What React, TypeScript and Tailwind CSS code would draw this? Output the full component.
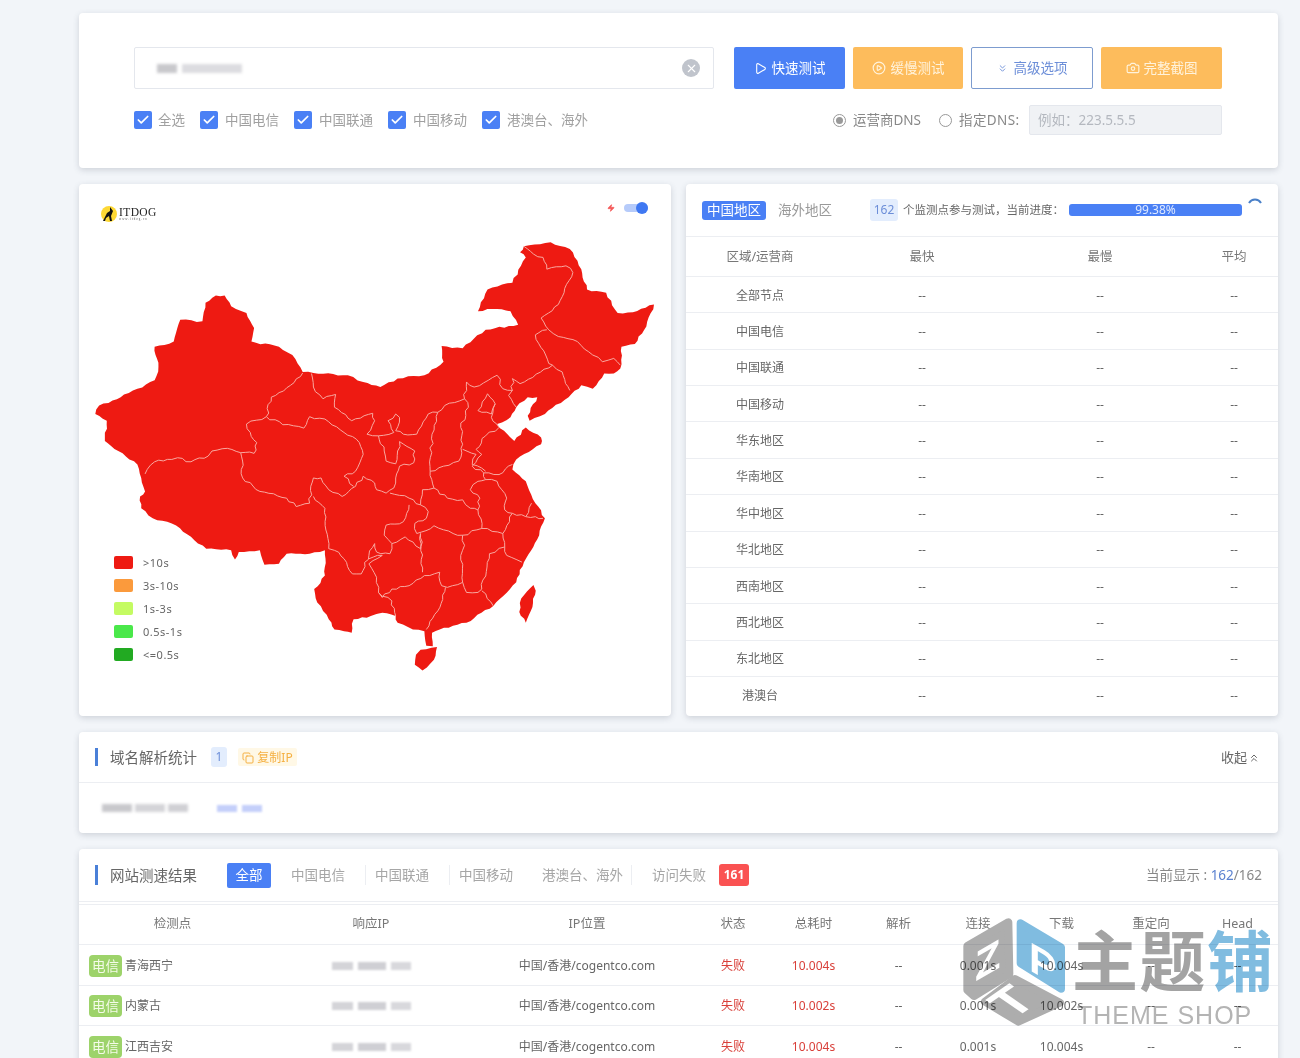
import {
  Camera,
  Check,
  ChevronsDown,
  ChevronsUp,
  CirclePlay,
  Copy,
  Play,
  X,
  Zap,
} from "lucide-react";

const outline =
  "40 680 50 655 85 640 115 622 150 605 195 580 205 540 195 480 245 465 262 400 320 405 328 350 355 328 378 328 395 360 435 380 455 425 448 465 520 480 555 505 582 555 610 558 700 565 740 585 785 600 830 575 900 565 950 525 945 478 1000 485 1060 430 1145 415 1125 375 1090 368 1040 375 1065 310 1130 290 1165 215 1150 200 1160 182 1230 170 1280 190 1310 250 1325 310 1375 320 1405 380 1445 378 1500 355 1480 420 1450 472 1415 480 1412 545 1395 560 1370 560 1340 605 1310 595 1285 620 1215 680 1175 700 1170 685 1195 630 1170 630 1140 660 1125 690 1090 710 1125 750 1135 760 1165 720 1205 750 1205 770 1140 815 1130 845 1165 880 1190 945 1215 990 1200 1040 1160 1120 1140 1180 1080 1250 1010 1300 940 1320 920 1330 922 1370 905 1368 900 1325 870 1320 830 1300 825 1280 790 1270 760 1280 715 1290 710 1330 690 1325 665 1320 650 1290 620 1240 612 1200 640 1160 640 1085 600 1095 540 1095 520 1125 482 1128 470 1085 415 1090 405 1112 395 1085 330 1080 290 1045 240 1005 190 990 160 960 157 925 170 910 160 870 150 830 100 790 65 760 70 700 40 680";

const islands = [
  "1185 1188 1191 1205 1178 1265 1165 1300 1148 1268 1153 1228 1185 1188",
  "890 1380 933 1372 925 1410 895 1442 875 1425 878 1395 890 1380",
];

const borders = [
  "170 858 195 822 240 815 255 810 290 822 335 805 345 790 385 782 420 795 455 797 462 765 445 735 435 710 487 688 500 630 550 595 582 558",
  "420 795 425 870 470 910 540 930 565 955 600 945 610 870 630 870 650 905 685 925 720 895 740 865",
  "487 688 530 712 585 722 600 688 640 695 690 735 730 765 740 800 720 850 690 865 715 895",
  "605 560 610 600 635 635 668 622 665 660 710 700 765 678 770 700 750 740 780 745 820 735 805 700 825 680 835 690 825 730 845 740 880 740 910 680 935 675 965 648 1005 635 1010 585 1030 600 1090 565 1105 605 1130 610 1130 575 1150 590 1235 535 1260 555 1280 610",
  "780 745 795 790 800 820 825 828 830 790 835 762 875 790 872 825 835 835 825 870 820 900 800 915 775 905 770 885 740 865",
  "935 675 920 740 915 850 925 900 895 905 890 950 860 930 810 915",
  "1005 635 1015 660 995 720 1000 770 990 820 950 835 915 850",
  "1000 785 1035 800 1025 830 1060 850",
  "1040 670 1065 620 1085 650 1075 680 1050 675 1040 670",
  "1085 650 1075 690 1095 720",
  "1130 610 1120 625 1140 660",
  "1095 720 1060 745 1035 785 1050 800 1025 835 1055 855 1095 860 1130 830",
  "925 900 960 930 1000 935 1020 960 1040 965 1045 930 1020 905 1040 880 1060 875 1055 855",
  "1060 875 1090 880 1115 930 1110 965 1130 975 1165 985 1180 945",
  "1130 975 1105 1035 1050 1020 1040 965",
  "1165 985 1190 985 1210 990",
  "1105 1035 1110 1075 1115 1100 1155 1120",
  "890 950 910 970 905 990 875 1005 880 1035 925 1012 975 1035 1000 1040 1050 1020",
  "860 950 845 1000 800 1010 795 1040 815 1065 850 1045 870 1060 890 1080 890 1035",
  "610 925 640 960 648 1050 650 1080 665 1085 690 1110 712 1155 735 1155 755 1100 770 1065 775 1090 810 1095 815 1065",
  "755 1110 790 1100 755 1125 775 1165 780 1210 790 1225 815 1200 860 1190 900 1160 940 1150 945 1190",
  "890 1035 895 1150",
  "1000 1040 1005 1070 995 1100 1000 1180 960 1195 945 1190",
  "1110 1075 1070 1095 1050 1200 1040 1210 1010 1210 1000 1180",
  "1050 1205 1080 1250",
  "955 1195 935 1265 905 1320",
  "780 1210 815 1235 825 1280",
  "1160 182 1185 205 1210 215 1220 250 1270 240 1288 260 1265 320 1250 355 1205 395 1225 430 1250 450 1300 465 1340 505 1365 525 1395 515 1412 535",
  "1220 430 1190 445 1225 530 1235 535",
];

// break long straight map segments into small uneven steps so borders look natural
function rough(points: string, amp: number) {
  const n = points.split(" ").map(Number);
  const out: string[] = [`${n[0]},${n[1]}`];
  for (let i = 2; i < n.length; i += 2) {
    const [x0, y0, x1, y1] = [n[i - 2], n[i - 1], n[i], n[i + 1]];
    const len = Math.hypot(x1 - x0, y1 - y0);
    const steps = Math.max(1, Math.round(len / 13));
    for (let s = 1; s < steps; s++) {
      const t = s / steps;
      const seed = Math.sin(x0 * 12.9898 + y0 * 78.233 + s * 37.719) * 43758.5453;
      const off = (seed - Math.floor(seed) - 0.5) * 2 * amp;
      out.push(
        `${(x0 + (x1 - x0) * t - ((y1 - y0) / len) * off).toFixed(1)},${(y0 + (y1 - y0) * t + ((x1 - x0) / len) * off).toFixed(1)}`,
      );
    }
    out.push(`${x1},${y1}`);
  }
  return out.join(" ");
}

const regions = [
  "全部节点",
  "中国电信",
  "中国联通",
  "中国移动",
  "华东地区",
  "华南地区",
  "华中地区",
  "华北地区",
  "西南地区",
  "西北地区",
  "东北地区",
  "港澳台",
];

const results = [
  { name: "青海西宁", total: "10.004s" },
  { name: "内蒙古", total: "10.002s" },
  { name: "江西吉安", total: "10.004s" },
];

const cardClass = "bg-white rounded shadow-[0_2px_6px_rgba(60,70,90,0.2)]";
const speedCols =
  "grid grid-cols-[187px_210px_222px_70px_91px_79px_80px_87px_92px_81px]";

function Checkbox({ label, first }: { label: string; first?: boolean }) {
  return (
    <label className={first ? "flex items-center gap-[6px]" : "flex items-center gap-[7px]"}>
      <span className="flex h-[18px] w-[18px] items-center justify-center rounded-[2px] bg-[#4a80f5]">
        <Check className="h-[14px] w-[14px] text-white" strokeWidth={3} />
      </span>
      <span className="text-[13.5px] text-[#a0a0a0]">{label}</span>
    </label>
  );
}

function BlurIp() {
  return (
    <div className="flex items-center justify-center gap-[5px] blur-[1px]">
      <span className="h-[8px] w-[21px] bg-[#d4d4d8]" />
      <span className="h-[8px] w-[28px] bg-[#cfcfd4]" />
      <span className="h-[8px] w-[20px] bg-[#d8d8dc]" />
    </div>
  );
}

function Watermark() {
  return (
    <div className="pointer-events-none absolute left-[955px] top-[910px] h-[125px] w-[320px] mix-blend-multiply">
      <svg viewBox="0 0 360 375" className="absolute left-0 top-0 h-[125px] w-[120px]">
        <g strokeLinejoin="round" strokeWidth="24">
          <path d="M37 108L160 37 163 192 57 258 37 240Z" fill="#adadad" stroke="#adadad" />
          <path d="M197 40L318 112 318 236 197 160Z" fill="#80bce0" stroke="#80bce0" />
          <path d="M90 275L180 207 315 278 190 335Z" fill="#adadad" stroke="#adadad" />
        </g>
        <text
          fontSize="125"
          fontWeight="700"
          fill="#ffffff"
          fontFamily="Liberation Sans, sans-serif"
          transform="translate(60 215) skewY(-30)"
        >
          Z
        </text>
        <text
          fontSize="125"
          fontWeight="700"
          fill="#ffffff"
          fontFamily="Liberation Sans, sans-serif"
          transform="translate(222 180) skewY(30)"
        >
          P
        </text>
        <text
          fontSize="150"
          fontWeight="700"
          fill="#ffffff"
          fontFamily="Liberation Sans, sans-serif"
          transform="matrix(0.82 -0.57 0.82 0.57 174 330)"
        >
          T
        </text>
      </svg>
      <div className="absolute left-[117px] top-[6px] whitespace-nowrap text-[66px] font-bold leading-[88px] tracking-[1.5px] text-[#a3a3a3]">
        主题<span className="text-[#80bce0]">铺</span>
      </div>
      <div className="absolute left-[122px] top-[90px] whitespace-nowrap font-['Liberation_Sans',sans-serif] text-[25px] leading-[30px] tracking-[1px] text-[#b4b4b4]">
        THEME SHOP
      </div>
    </div>
  );
}

export default function App() {
  return (
    <div className="relative h-[1058px] overflow-hidden bg-[#f2f5f9] pl-[79px] pt-[13px] font-['Noto_Sans','Noto_Sans_CJK_SC',sans-serif] text-[12px] text-[#666]">
      <div className="flex w-[1199px] flex-col gap-[16px]">
        {/* Search card */}
        <section className={`${cardClass} h-[155px] pl-[55px] pr-[56px] pt-[34px]`}>
          <div className="flex items-start">
            <div className="flex h-[42px] w-[580px] items-center justify-between rounded-[2px] border border-[#e4e7ed] pl-[22px] pr-[13px]">
              <div className="flex items-center gap-[5px] blur-[1.5px]">
                <span className="h-[9px] w-[20px] bg-[#c8c8cc]" />
                <span className="h-[9px] w-[60px] bg-[#dcdce0]" />
              </div>
              <span className="flex h-[18px] w-[18px] items-center justify-center rounded-full bg-[#c0c4cc]">
                <X className="h-[13px] w-[13px] text-white" strokeWidth={2} />
              </span>
            </div>
            <div className="ml-[20px] flex gap-[8px] text-[13.5px]">
              <button className="flex h-[42px] w-[111px] items-center justify-center gap-[5px] rounded-[2px] bg-[#4a80f5] text-white">
                <Play className="h-[13px] w-[13px]" />
                快速测试
              </button>
              <button className="flex h-[42px] w-[110px] items-center justify-center gap-[5px] rounded-[2px] bg-[#fdbc5c] text-[#fff3dc]">
                <CirclePlay className="h-[14px] w-[14px]" />
                缓慢测试
              </button>
              <button className="flex h-[42px] w-[122px] items-center justify-center gap-[6px] rounded-[2px] border border-[#7d9ccf] bg-white text-[#6c8ed8]">
                <ChevronsDown className="h-[11px] w-[11px]" />
                高级选项
              </button>
              <button className="flex h-[42px] w-[121px] items-center justify-center gap-[4px] rounded-[2px] bg-[#fdbc5c] text-[#fff3dc]">
                <Camera className="h-[14px] w-[14px]" />
                完整截图
              </button>
            </div>
          </div>
          <div className="mt-[16px] flex h-[30px] items-center">
            <div className="flex items-center gap-[15px]">
              <Checkbox label="全选" first />
              <Checkbox label="中国电信" />
              <Checkbox label="中国联通" />
              <Checkbox label="中国移动" />
              <Checkbox label="港澳台、海外" />
            </div>
            <div className="ml-auto flex items-center text-[13.5px] text-[#888]">
              <span className="flex h-[13px] w-[13px] items-center justify-center rounded-full border border-[#999]">
                <span className="h-[7px] w-[7px] rounded-full bg-[#999]" />
              </span>
              <span className="ml-[7px] w-[70px] whitespace-nowrap">运营商DNS</span>
              <span className="ml-[16px] h-[13px] w-[13px] rounded-full border border-[#999]" />
              <span className="ml-[7px] w-[62px] whitespace-nowrap tracking-[0.4px]">指定DNS:</span>
              <div className="ml-[8px] flex h-[30px] w-[193px] items-center rounded-[2px] border border-[#e4e7ed] bg-[#f0f2f5] pl-[8px] text-[#b4b8bf]">
                {"例如\uFF1A223.5.5.5"}
              </div>
            </div>
          </div>
        </section>

        <div className="flex gap-[15px]">
          {/* Map card */}
          <section className={`${cardClass} relative h-[532px] w-[592px]`}>
            <div className="absolute left-[21px] top-[21px] flex items-center">
              <svg viewBox="0 0 18 18" className="h-[18px] w-[18px]">
                <circle cx="9" cy="9" r="8" fill="#fdd835" />
                <path d="M3 16L7 8 10 6 10 2 13 6 11 11 12 16 10 16 9 11 6 13 5 16Z" fill="#111" />
              </svg>
              <div className="ml-[1px] font-['Liberation_Serif',serif] leading-none text-[#222]">
                <div className="text-[11.5px] tracking-[0.4px]">ITDOG</div>
                <div className="text-[3px] tracking-[1px] text-[#555]">www.itdog.cn</div>
              </div>
            </div>
            <div className="absolute left-[528px] top-[18px] flex items-center gap-[9px]">
              <Zap className="h-[12px] w-[8px] fill-[#f45a5a] text-[#f45a5a]" />
              <span className="relative h-[8px] w-[24px] rounded-full bg-[#b6cbfa]">
                <span className="absolute right-0 top-[-2px] h-[12px] w-[12px] rounded-full bg-[#3f78f2]" />
              </span>
            </div>
            <svg
              viewBox="0 0 1568 1574"
              preserveAspectRatio="none"
              className="absolute left-[1px] top-[1px] h-[530px] w-[600px]"
            >
              <polygon points={rough(outline, 3)} fill="#ee1a12" />
              {islands.map((points) => (
                <polygon key={points} points={rough(points, 2)} fill="#ee1a12" />
              ))}
              {borders.map((points) => (
                <polyline
                  key={points}
                  points={rough(points, 4)}
                  fill="none"
                  stroke="#f9a8a0"
                  strokeWidth="1"
                  vectorEffect="non-scaling-stroke"
                />
              ))}
            </svg>
            <div className="absolute left-[35px] top-[372px] flex flex-col gap-[10px] text-[11px] leading-[13px] tracking-[0.5px] text-[#666]">
              <div className="flex items-center gap-[10px]">
                <span className="h-[13px] w-[19px] rounded-[2px] bg-[#ee1a12]" />
                &gt;10s
              </div>
              <div className="flex items-center gap-[10px]">
                <span className="h-[13px] w-[19px] rounded-[2px] bg-[#fb9a3c]" />
                3s-10s
              </div>
              <div className="flex items-center gap-[10px]">
                <span className="h-[13px] w-[19px] rounded-[2px] bg-[#c4fb62]" />
                1s-3s
              </div>
              <div className="flex items-center gap-[10px]">
                <span className="h-[13px] w-[19px] rounded-[2px] bg-[#4ae84a]" />
                0.5s-1s
              </div>
              <div className="flex items-center gap-[10px]">
                <span className="h-[13px] w-[19px] rounded-[2px] bg-[#22aa22]" />
                &lt;=0.5s
              </div>
            </div>
          </section>

          {/* Region table */}
          <section className={`${cardClass} h-[532px] w-[592px] overflow-hidden`}>
            <div className="flex h-[53px] items-center border-b border-[#eceef2] pl-[16px]">
              <span className="flex h-[19px] w-[64px] items-center justify-center rounded-[3px] bg-[#4a80f5] text-[13.5px] text-white">
                中国地区
              </span>
              <span className="ml-[12px] text-[13.5px] text-[#999]">海外地区</span>
              <span className="ml-[38px] flex h-[22px] w-[28px] items-center justify-center rounded-[3px] bg-[#e3edfd] text-[#6c8ed8]">
                162
              </span>
              <span className="ml-[5px] w-[166px] whitespace-nowrap text-[11.5px] text-[#666]">
                {"个监测点参与测试\uFF0C当前进度\uFF1A"}
              </span>
              <span className="flex h-[12px] w-[173px] items-center justify-center rounded-[3px] bg-[#4a80f5] text-[12px] text-[#dfe9ff]">
                99.38%
              </span>
              <svg viewBox="0 0 14 14" className="mb-[10px] ml-[6px] h-[14px] w-[14px]">
                <path d="M1 5A7 7 0 0 1 13 5" fill="none" stroke="#4a80c8" strokeWidth="2" />
              </svg>
            </div>
            <div className="grid h-[40px] grid-cols-[148px_176px_180px_88px] items-center border-b border-[#eceef2] pt-[2px] text-center text-[12.5px] text-[#777]">
              <span>区域/运营商</span>
              <span>最快</span>
              <span>最慢</span>
              <span>平均</span>
            </div>
            {regions.map((region) => (
              <div
                key={region}
                className="grid h-[36.36px] grid-cols-[148px_176px_180px_88px] items-center border-b border-[#eceef2] pt-[2px] text-center text-[#666] last:border-b-0"
              >
                <span>{region}</span>
                <span>--</span>
                <span>--</span>
                <span>--</span>
              </div>
            ))}
          </section>
        </div>

        {/* DNS stats */}
        <section className={`${cardClass} h-[101px]`}>
          <div className="flex h-[51px] items-center border-b border-[#eceef2] pl-[16px] pr-[18px]">
            <span className="h-[18px] w-[3px] bg-[#4a80d8]" />
            <span className="ml-[12px] text-[14.5px] leading-[18px] text-[#666]">域名解析统计</span>
            <span className="ml-[14px] flex h-[20px] w-[16px] items-center justify-center rounded-[3px] bg-[#e3edfd] text-[#6c8ed8]">
              1
            </span>
            <span className="ml-[11px] flex h-[18px] w-[59px] items-center justify-center gap-[3px] rounded-[2px] bg-[#fff8e6] pt-[1px] text-[#f5b042]">
              <Copy className="h-[12px] w-[12px]" />
              复制IP
            </span>
            <span className="ml-auto flex items-center gap-[1px] pt-[2px] text-[13px] text-[#666]">
              收起
              <ChevronsUp className="h-[12px] w-[12px]" />
            </span>
          </div>
          <div className="flex h-[50px] items-center pl-[23px]">
            <div className="flex h-[14px] w-[88px] items-center gap-[3px] blur-[1.5px]">
              <span className="h-[8px] w-[30px] bg-[#c8c8cc]" />
              <span className="h-[8px] w-[30px] bg-[#d4d4d8]" />
              <span className="h-[8px] w-[20px] bg-[#d0d0d4]" />
            </div>
            <div className="ml-[27px] flex h-[14px] w-[48px] items-center gap-[5px] blur-[1px]">
              <span className="h-[7px] w-[20px] bg-[#c4cffa]" />
              <span className="h-[7px] w-[20px] bg-[#c4cffa]" />
            </div>
          </div>
        </section>

        {/* Speed results */}
        <section className={`${cardClass} h-[300px]`}>
          <div className="flex h-[53px] items-center border-b border-[#eceef2] pl-[16px] pr-[16px]">
            <span className="h-[20px] w-[3px] bg-[#4a80d8]" />
            <span className="ml-[12px] text-[14.5px] leading-[18px] text-[#666]">网站测速结果</span>
            <span className="ml-[30px] flex h-[25px] w-[44px] items-center justify-center rounded-[2px] bg-[#4a80f5] text-[13.5px] text-white">
              全部
            </span>
            <div className="ml-[20px] flex items-center text-[13.5px] text-[#a6a6a6]">
              <span className="mr-[9px] w-[75px] border-r border-[#eceef2]">中国电信</span>
              <span className="mr-[9px] w-[75px] border-r border-[#eceef2]">中国联通</span>
              <span className="w-[83px]">中国移动</span>
              <span className="mr-[20px] w-[90px] border-r border-[#eceef2]">港澳台、海外</span>
              <span>访问失败</span>
            </div>
            <span className="ml-[13px] flex h-[22px] w-[30px] items-center justify-center rounded-[3px] bg-[#fa5252] font-bold text-white">
              161
            </span>
            <span className="ml-auto text-[13.5px] text-[#888]">
              当前显示 : <span className="text-[#5b82d0]">162</span>/162
            </span>
          </div>
          <div className={`${speedCols} mt-[2px] h-[41px] items-center border-y border-[#eceef2] text-center text-[12.5px] text-[#777]`}>
            <span>检测点</span>
            <span>响应IP</span>
            <span>IP位置</span>
            <span>状态</span>
            <span>总耗时</span>
            <span>解析</span>
            <span>连接</span>
            <span>下载</span>
            <span>重定向</span>
            <span>Head</span>
          </div>
          {results.map((row) => (
            <div
              key={row.name}
              className={`${speedCols} h-[40.5px] items-center border-b border-[#eceef2] pt-[2px] text-center text-[#666]`}
            >
              <span className="flex items-center gap-[3px] pl-[10px] text-left">
                <span className="flex h-[22px] w-[33px] items-center justify-center rounded-[4px] bg-[#9dd36a] text-[13.5px] text-[#f4fbe8]">
                  电信
                </span>
                {row.name}
              </span>
              <BlurIp />
              <span>中国/香港/cogentco.com</span>
              <span className="text-[#d9403a]">失败</span>
              <span className="text-[#d9403a]">{row.total}</span>
              <span>--</span>
              <span>0.001s</span>
              <span>{row.total}</span>
              <span>--</span>
              <span>--</span>
            </div>
          ))}
        </section>
      </div>
      <Watermark />
    </div>
  );
}
